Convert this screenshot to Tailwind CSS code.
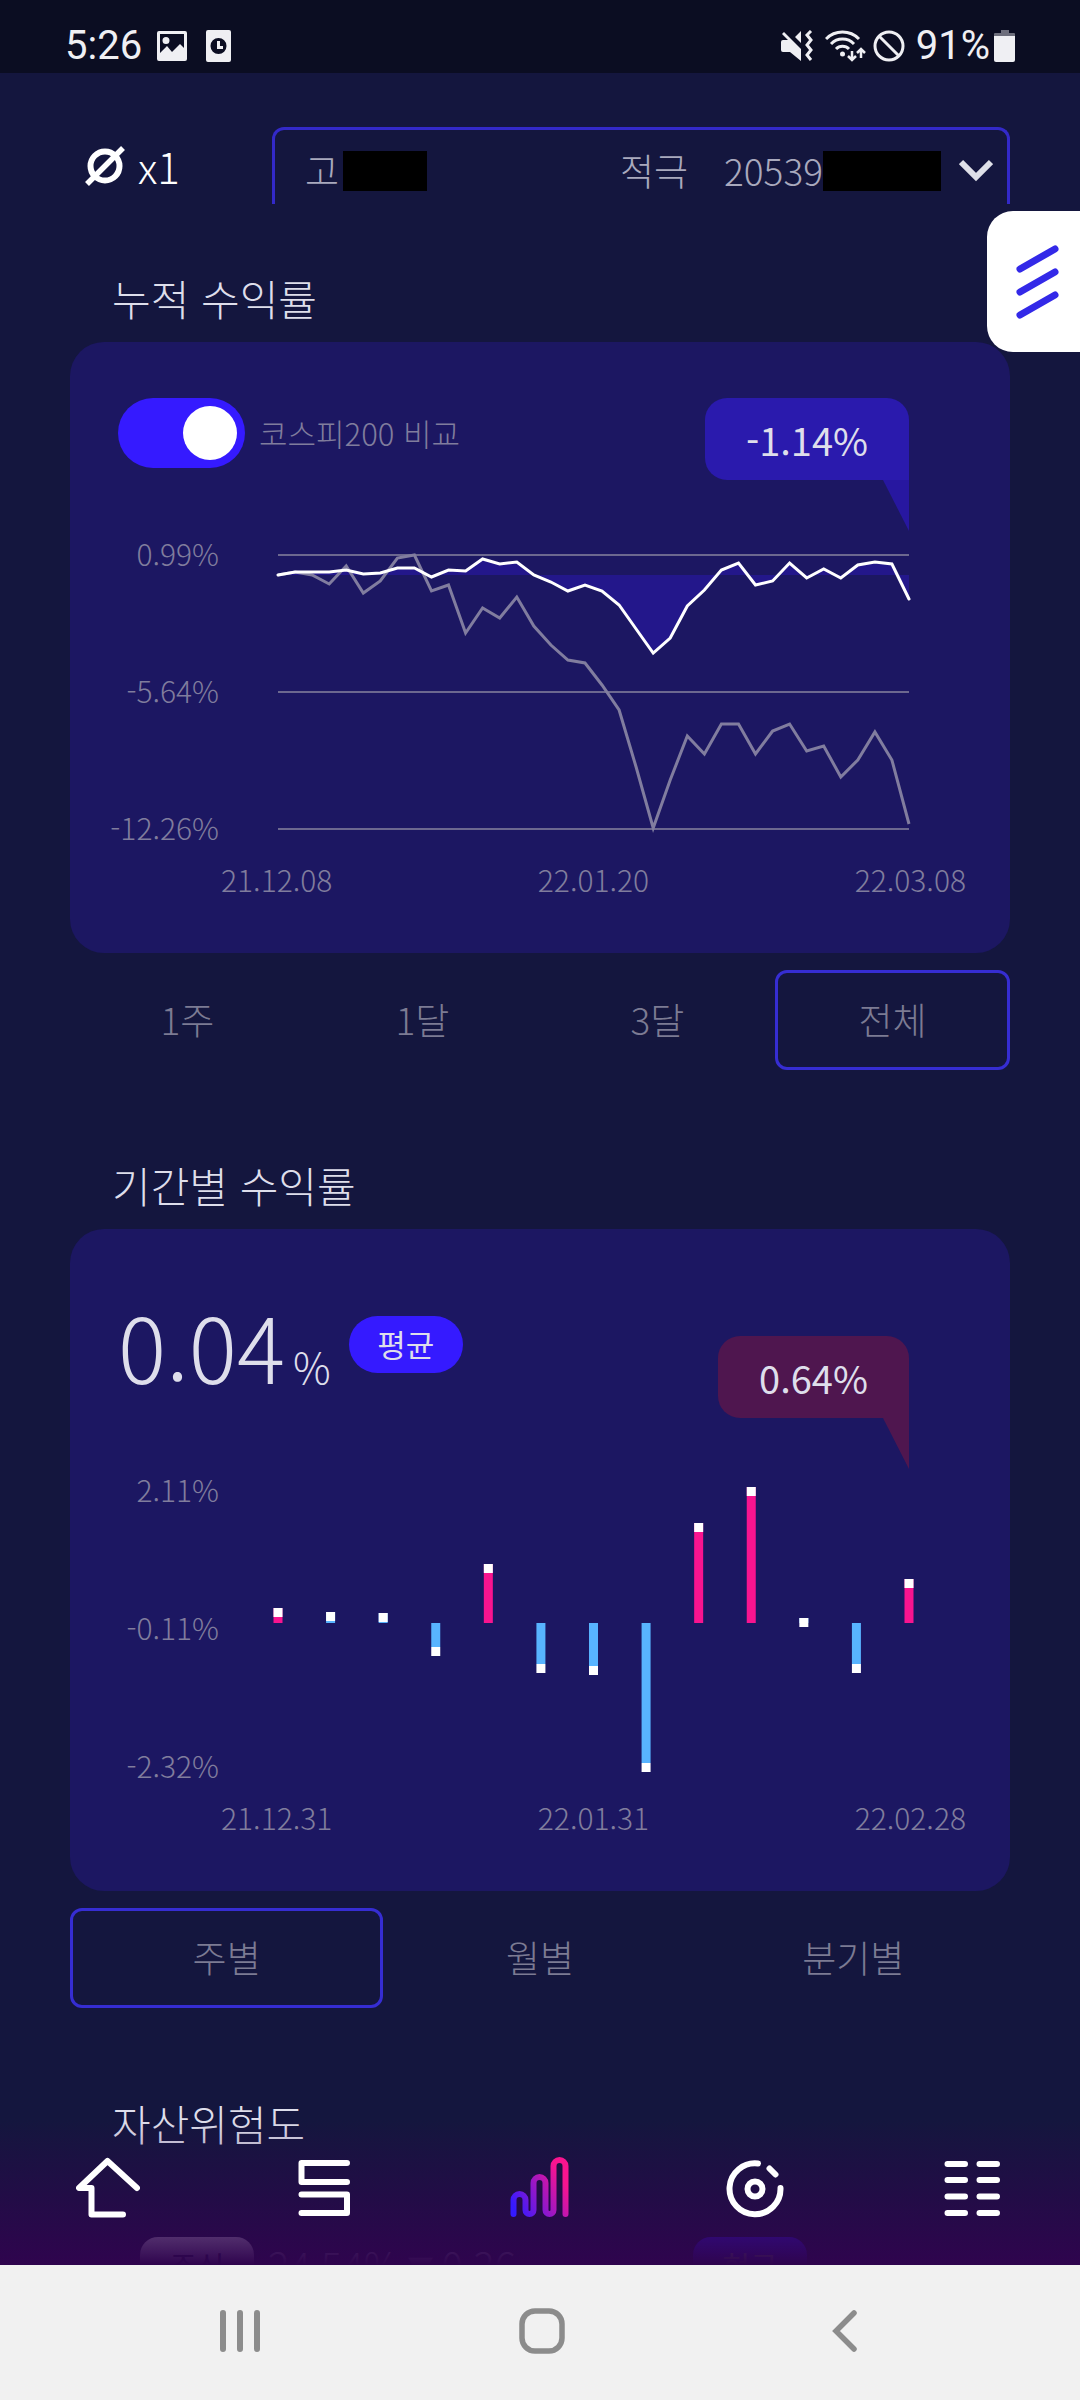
<!DOCTYPE html>
<html lang="ko">
<head>
    <meta charset="UTF-8">
    <meta name="viewport" content="width=device-width, initial-scale=1.0">
    <script src="https://cdn.jsdelivr.net/npm/@tailwindcss/browser@4"></script>
    <title>수익률</title>
</head>
<body class="h-screen flex flex-col overflow-hidden bg-[#14163e] font-['Noto_Sans_CJK_KR',sans-serif] font-light text-[#dedeeb]">
    <!-- status bar -->
    <div class="shrink-0 h-[73px] pt-[19px] pl-[65px] pr-[64px] flex items-center justify-between bg-[#0b0d22] font-[Roboto,sans-serif] font-normal text-[40px] leading-[46px] text-[#efeff3]">
        <div class="flex items-center">
            <span>5:26</span>
            <svg class="ml-[14px] w-8 h-8" viewBox="0 0 32 32" fill="currentColor"><path fill-rule="evenodd" d="M3 1h26a2 2 0 0 1 2 2v26a2 2 0 0 1-2 2H3a2 2 0 0 1-2-2V3a2 2 0 0 1 2-2zM4 4v19l7-7 5 6 8-8 4 4V4zM10 7a3.500 3.500 0 1 1 0 7a3.500 3.500 0 0 1 0-7z"/></svg>
            <svg class="ml-[14px] w-8 h-8" viewBox="0 0 32 32" fill="currentColor"><path fill-rule="evenodd" d="M6 0h21a2 2 0 0 1 2 2v28a2 2 0 0 1-2 2H6a2 2 0 0 1-2-2V2a2 2 0 0 1 2-2zM16.500 8a8 8 0 1 0 0 16a8 8 0 0 0 0-16zM15 11h3v5h3v3h-6z"/></svg>
        </div>
        <div class="flex items-center">
            <svg class="w-8 h-8" viewBox="0 0 32 32" fill="none" stroke="currentColor" stroke-width="3"><path fill="currentColor" stroke="none" d="M0 12a2 2 0 0 1 2-2h5L1 4l2-2 17 17v12L9 22H2a2 2 0 0 1-2-2zM20 1v12l-6-6z"/><path d="M30 1l-4 4 4 5-4 5 4 5-4 5 4 5"/></svg>
            <svg class="ml-3 w-[42px] h-8" viewBox="0 0 42 32" fill="none" stroke="currentColor" stroke-width="3"><path d="M1 9a23 23 0 0 1 33 0M6 14a16 16 0 0 1 23 0M11 19a9 9 0 0 1 13 0"/><circle cx="17.500" cy="24" r="2.500" fill="currentColor" stroke="none"/><path stroke-width="2.500" d="M27 21v9M23 26l4 4 4-4M36 28v-9M32 23l4-4 4 4"/></svg>
            <svg class="ml-1.5 w-8 h-8" viewBox="0 0 32 32" fill="none" stroke="currentColor" stroke-width="3"><circle cx="16" cy="16" r="14"/><path d="M6 6l20 20"/></svg>
            <span class="ml-[11px]">91%</span>
            <svg class="ml-1 w-[22px] h-8" viewBox="0 0 22 32"><path fill="#6d6e7c" d="M7 0h8v3h5a1 1 0 0 1 1 1v3H0V4a1 1 0 0 1 1-1h6z"/><path fill="#efeff3" d="M0 6h21v24a2 2 0 0 1-2 2H2a2 2 0 0 1-2-2z"/></svg>
        </div>
    </div>

    <div class="relative flex-1 min-h-0 overflow-hidden">
        <!-- account header -->
        <header class="pt-[54px] pl-[84px] pr-[70px] flex">
            <div class="w-[188px] h-[77px] flex items-center gap-3 text-[42px] text-white">
                <svg class="w-[42px] h-[42px]" viewBox="0 0 42 42" fill="none" stroke="currentColor" stroke-width="6"><circle cx="21" cy="21" r="14.500"/><path stroke-width="5.500" d="M3 39L39 3"/></svg>
                <span class="leading-[60px]">x1</span>
            </div>
            <div class="relative flex-1 h-[77px] pt-2 pl-[30px] pr-[14px] flex items-center rounded-t-xl border-[3px] border-b-0 border-[#3329c8] text-[37px] text-[#a9a9bd]">
                <span>고</span>
                <span class="ml-1 w-[84px] h-10 bg-black"></span>
                <span class="ml-auto">적극</span>
                <span class="ml-9">20539</span>
                <span class="w-[118px] h-10 bg-black"></span>
                <svg class="ml-[18px] w-[34px] h-6" viewBox="0 0 34 24" fill="none" stroke="#dfe0e8" stroke-width="6"><path d="M2 3l15 15L32 3"/></svg>
                <select aria-label="계좌 선택" class="absolute inset-0 w-full h-full opacity-0">
                    <option>적극 20539</option>
                </select>
            </div>
        </header>

        <button aria-label="메뉴 열기" class="absolute right-0 top-[138px] w-[93px] h-[141px] pl-7 rounded-l-[26px] bg-white">
            <svg class="w-[46px] h-[76px]" viewBox="0 0 46 76" fill="none" stroke="#3329e8" stroke-width="7" stroke-linecap="round"><path d="M5 25L40 5M5 48L40 28M5 71L40 51"/></svg>
        </button>

        <main class="px-[70px]">
            <!-- cumulative return -->
            <h2 class="mt-16 mb-[14px] pl-[42px] text-[42px] leading-[60px]">누적 수익률</h2>
            <section class="rounded-[34px] bg-[#1c1762] pt-14 pb-[51px]">
                <div class="pl-12 pr-[101px] h-[82px] flex items-start justify-between">
                    <div class="flex items-center gap-[14px]">
                        <input id="kospi" type="checkbox" checked class="appearance-none w-[127px] h-[70px] p-2 rounded-full bg-[#351aff] before:block before:ml-auto before:w-[54px] before:h-[54px] before:rounded-full before:bg-white">
                        <label for="kospi" class="text-[31px] leading-[46px] text-[#807d9d]">코스피200 비교</label>
                    </div>
                    <div class="relative w-[204px] h-[82px] flex items-center justify-center rounded-[22px] rounded-br-none bg-[#2a1aad] font-normal text-[38px]">
                        -1.14%
                        <svg class="absolute right-0 top-full w-[26px] h-[51px]" viewBox="0 0 26 51"><path fill="#2717a0" d="M0 0h26v51z"/></svg>
                    </div>
                </div>
                <div class="mt-[50px] pr-[101px] flex text-[30px] leading-[46px] text-[#807d9d]">
                    <div class="w-[149px] h-80 flex flex-col justify-between text-right">
                        <span>0.99%</span>
                        <span>-5.64%</span>
                        <span>-12.26%</span>
                    </div>
                    <div class="flex-1 ml-[59px] pt-[25px]">
                        <svg id="line-chart" class="w-full overflow-visible" viewBox="0 0 631 274" fill="none">
                            <path stroke="#6c688f" stroke-width="2" d="M0 0H631M0 137H631M0 274H631"/>
                        </svg>
                    </div>
                </div>
                <div class="mt-1.5 pl-[151px] pr-11 flex justify-between text-[30px] leading-[46px] text-[#807d9d]">
                    <span>21.12.08</span>
                    <span>22.01.20</span>
                    <span>22.03.08</span>
                </div>
            </section>
            <div class="mt-[17px] grid grid-cols-4 text-[37px] text-[#7c7b93]">
                <button class="h-[100px]">1주</button>
                <button class="h-[100px]">1달</button>
                <button class="h-[100px]">3달</button>
                <button class="h-[100px] rounded-xl border-[3px] border-[#362dd2]">전체</button>
            </div>

            <!-- return by period -->
            <h2 class="mt-[85px] mb-[14px] pl-[42px] text-[42px] leading-[60px]">기간별 수익률</h2>
            <section class="rounded-[34px] bg-[#1c1762] pt-[82px] pb-[51px]">
                <div class="pl-12 pr-[101px] h-[107px] flex items-start">
                    <div class="flex items-baseline gap-2">
                        <span class="text-[90px] leading-[68px]">0.04</span>
                        <span class="text-[42px] leading-[68px]">%</span>
                    </div>
                    <span class="ml-[18px] mt-[5px] w-[114px] h-[57px] flex items-center justify-center rounded-full bg-[#351aff] font-normal text-[31px]">평균</span>
                    <div class="relative ml-auto mt-[25px] w-[191px] h-[82px] flex items-center justify-center rounded-[22px] rounded-br-none bg-[#4f164f] font-normal text-[38px]">
                        0.64%
                        <svg class="absolute right-0 top-full w-[26px] h-[51px]" viewBox="0 0 26 51"><path fill="#4f164f" d="M0 0h26v51z"/></svg>
                    </div>
                </div>
                <div class="mt-12 pr-[101px] flex text-[30px] leading-[46px] text-[#807d9d]">
                    <div class="w-[149px] h-[322px] flex flex-col justify-between text-right">
                        <span>2.11%</span>
                        <span>-0.11%</span>
                        <span>-2.32%</span>
                    </div>
                    <div class="flex-1 ml-[59px] pt-[25px]">
                        <svg id="bar-chart" class="w-full overflow-visible" viewBox="0 0 631 274"></svg>
                    </div>
                </div>
                <div class="mt-1.5 pl-[151px] pr-11 flex justify-between text-[30px] leading-[46px] text-[#807d9d]">
                    <span>21.12.31</span>
                    <span>22.01.31</span>
                    <span>22.02.28</span>
                </div>
            </section>
            <div class="mt-[17px] grid grid-cols-3 text-[37px] text-[#7c7b93]">
                <button class="h-[100px] rounded-xl border-[3px] border-[#362dd2]">주별</button>
                <button class="h-[100px]">월별</button>
                <button class="h-[100px]">분기별</button>
            </div>

            <!-- asset risk -->
            <h2 class="mt-[85px] pl-[42px] text-[42px] leading-[60px]">자산위험도</h2>
            <div class="mt-[84px] pl-[70px] flex items-center text-[40px] leading-[57px] text-[#a9a9bd]">
                <span class="w-[114px] h-[57px] flex items-center justify-center rounded-[18px] bg-[#dedeeb] font-normal text-[30px] text-[#14163e]">주식</span>
                <span class="ml-[14px]">24.54%</span>
                <span class="ml-2 text-[26px]">▼</span>
                <span class="ml-2">0.36</span>
                <span class="ml-auto mr-[203px] w-[114px] h-[57px] flex items-center justify-center rounded-[18px] bg-[#351aff] font-normal text-[30px]">현금</span>
            </div>
        </main>

        <!-- bottom tabs -->
        <nav class="absolute inset-x-0 bottom-0 h-[145px] pt-9 grid grid-cols-5 items-start justify-items-center bg-linear-to-b from-[#2f0450]/0 to-[#2f044e] text-white">
            <a href="#home" aria-label="홈"><svg class="w-16 h-16" viewBox="0 0 64 64" fill="none" stroke="currentColor" stroke-width="6" stroke-linecap="round" stroke-linejoin="round"><path d="M61 32L31.500 5L3 32H15.500V58.500H47"/></svg></a>
            <a href="#strategy" aria-label="전략"><svg class="w-16 h-16" viewBox="0 0 64 64" fill="none" stroke="currentColor" stroke-width="6" stroke-linecap="round" stroke-linejoin="round"><path d="M55 7H9.500V26H55M9.500 38.500H55V57H9.500"/></svg></a>
            <a href="#returns" aria-label="수익률">
                <svg class="w-16 h-16" viewBox="0 0 64 64" fill="none" stroke="url(#bars)" stroke-width="6" stroke-linecap="round">
                    <defs><linearGradient id="bars" gradientUnits="userSpaceOnUse" x1="5" y1="50" x2="54" y2="22"><stop offset="0" stop-color="#351aff"/><stop offset="1" stop-color="#f8148f"/></linearGradient></defs>
                    <path d="M5.500 58V44a6 6 0 0 1 12 0V54a4 4 0 0 0 8 0V27a6 6 0 0 1 12 0V54a4 4 0 0 0 8 0V10a6 6 0 0 1 12 0V58"/>
                </svg>
            </a>
            <a href="#insight" aria-label="인사이트"><svg class="w-16 h-16" viewBox="0 0 64 64" fill="none" stroke="currentColor" stroke-width="6" stroke-linecap="round"><path d="M34 7.500A25.500 25.500 0 1 0 56.500 32M45.500 12.500l6 6"/><circle cx="31" cy="33" r="7.500"/></svg></a>
            <a href="#more" aria-label="전체 메뉴"><svg class="w-16 h-16" viewBox="0 0 64 64" fill="none" stroke="currentColor" stroke-width="6" stroke-linecap="round"><path d="M7.500 8H25M39.500 8H57M7.500 24H25M39.500 24H57M7.500 40.500H25M39.500 40.500H57M7.500 57H25M39.500 57H57"/></svg></a>
        </nav>
    </div>

    <!-- system navigation -->
    <div class="shrink-0 h-[135px] pl-[217px] pr-[213px] pb-1 flex items-center justify-between bg-[#f1f1f1] text-[#8c8c8c]">
        <button aria-label="최근 앱"><svg class="w-[46px] h-[46px]" viewBox="0 0 46 46" fill="none" stroke="currentColor" stroke-width="6" stroke-linecap="round"><path d="M6 5v36M23 5v36M40 5v36"/></svg></button>
        <button aria-label="홈 화면"><svg class="w-[46px] h-[46px]" viewBox="0 0 46 46" fill="none" stroke="currentColor" stroke-width="5.500"><rect x="3" y="3" width="40" height="40" rx="13"/></svg></button>
        <button aria-label="뒤로"><svg class="w-[46px] h-[46px]" viewBox="0 0 46 46" fill="none" stroke="currentColor" stroke-width="5.500" stroke-linecap="round"><path d="M33 5L15 23L33 41"/></svg></button>
    </div>

    <script>
        // y positions on the 631x274 chart area
        const mine = [20, 17, 17, 17, 15, 19, 18, 13, 13, 22, 15, 16, 4, 9, 7, 20, 27, 36, 30, 36, 50, 74, 98, 83, 51, 35, 15, 8, 30, 26, 8, 23, 14, 23, 10, 7, 9, 44];
        const kospi = [20, 17, 20, 29, 11, 38, 26, 3, 0, 36, 30, 78, 53, 63, 42, 71, 90, 105, 108, 130, 155, 212, 273, 225, 181, 199, 169, 169, 199, 176, 169, 196, 191, 222, 205, 177, 205, 269];
        const toPoints = (values) => values.map((y, i) => `${(i * 631 / (values.length - 1)).toFixed(1)},${y}`).join(' ');
        document.getElementById('line-chart').innerHTML += `
            <polygon fill="#23178b" points="0,20 ${toPoints(mine)} 631,20"/>
            <polyline stroke="#817d9f" stroke-width="3" points="${toPoints(kospi)}"/>
            <polyline stroke="#fff" stroke-width="3" stroke-linecap="round" points="${toPoints(mine)}"/>`;

        // [top of the white cap, bar colour]
        const zero = 132;
        const bars = [[117, 'up'], [121, 'down'], [122, 'down'], [156, 'down'], [73, 'up'], [173, 'down'], [175, 'down'], [272, 'down'], [32, 'up'], [-4, 'up'], [127, 'down'], [173, 'down'], [88, 'up']];
        const colors = { up: '#f8148f', down: '#58b4ff' };
        document.getElementById('bar-chart').innerHTML = bars.map(([y, kind], i) => {
            const x = i * 631 / 12 - 4.5;
            const top = Math.min(y, zero);
            return `<rect x="${x}" y="${top}" width="9" height="${Math.abs(y - zero)}" fill="${colors[kind]}"/>
                <rect x="${x}" y="${y}" width="9" height="9" fill="#fff"/>`;
        }).join('');
    </script>
</body>
</html>
